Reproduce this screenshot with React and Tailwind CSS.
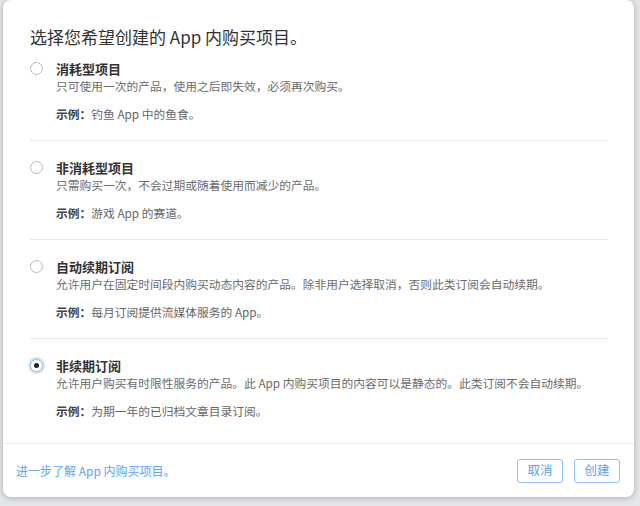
const options = [
  {
    title: "消耗型项目",
    desc: "只可使用一次的产品，使用之后即失效，必须再次购买。",
    example: "钓鱼 App 中的鱼食。",
  },
  {
    title: "非消耗型项目",
    desc: "只需购买一次，不会过期或随着使用而减少的产品。",
    example: "游戏 App 的赛道。",
  },
  {
    title: "自动续期订阅",
    desc: "允许用户在固定时间段内购买动态内容的产品。除非用户选择取消，否则此类订阅会自动续期。",
    example: "每月订阅提供流媒体服务的 App。",
  },
  {
    title: "非续期订阅",
    desc: "允许用户购买有时限性服务的产品。此 App 内购买项目的内容可以是静态的。此类订阅不会自动续期。",
    example: "为期一年的已归档文章目录订阅。",
  },
];

function Radio({ checked }) {
  if (checked) {
    return (
      <span className="mt-[2px] flex h-[13px] w-[13px] shrink-0 items-center justify-center rounded-full border border-[#9fb7d3] bg-white shadow-[0_0_0_2px_#cfe3fa]">
        <span className="h-[5px] w-[5px] rounded-full bg-[#222]" />
      </span>
    );
  }
  return (
    <span className="mt-[2px] h-[13px] w-[13px] shrink-0 rounded-full border border-[#b9b9b9] bg-white" />
  );
}

export default function App() {
  const selected = 3;

  return (
    <div
      className="flex h-[506px] w-[640px] overflow-hidden bg-[#e4e6ea]"
      style={{ fontFamily: '"Noto Sans CJK SC", "Noto Sans", sans-serif' }}
    >
      <div className="ml-[3px] flex h-[497px] w-[631px] flex-col rounded-lg bg-white shadow-[0_1px_6px_rgba(0,0,0,0.25)]">
        {/* heading */}
        <div className="pl-[27px] pt-[25px] text-[17px] leading-6 text-[#333]">
          选择您希望创建的 App 内购买项目。
        </div>

        {/* options */}
        <div className="mt-[11px] pl-[27px] pr-[26px]">
          {options.map((o, i) => (
            <div key={o.title}>
              {i > 0 && <div className="h-px bg-[#e8e8e8]" />}
              <div
                className={`flex gap-[13px] ${i === 0 ? "pt-0" : "pt-[18px]"} pb-[18px]`}
              >
                <Radio checked={i === selected} />
                <div className="flex flex-col">
                  <div className="text-[13px] font-semibold leading-[17px] text-[#333]">
                    {o.title}
                  </div>
                  <div className="text-[11.75px] leading-[17px] text-[#6b6b6b]">
                    {o.desc}
                  </div>
                  <div className="mt-[11px] text-[11.75px] leading-[17px] text-[#666]">
                    <span className="font-semibold text-[#444]">示例：</span>
                    {o.example}
                  </div>
                </div>
              </div>
            </div>
          ))}
        </div>

        {/* footer */}
        <div className="mt-auto flex h-[54px] items-center justify-between border-t border-[#ebebeb] pl-[13px] pr-[14px]">
          <a className="text-[12px] text-[#58a6f2]">进一步了解 App 内购买项目。</a>
          <div className="flex gap-[11px]">
            <button className="h-[24px] w-[46px] rounded-[3px] border border-[#8cc2f7] bg-white text-[12.5px] text-[#5aa3ee]">
              取消
            </button>
            <button className="h-[24px] w-[46px] rounded-[3px] border border-[#8cc2f7] bg-white text-[12.5px] text-[#5aa3ee]">
              创建
            </button>
          </div>
        </div>
      </div>
    </div>
  );
}
